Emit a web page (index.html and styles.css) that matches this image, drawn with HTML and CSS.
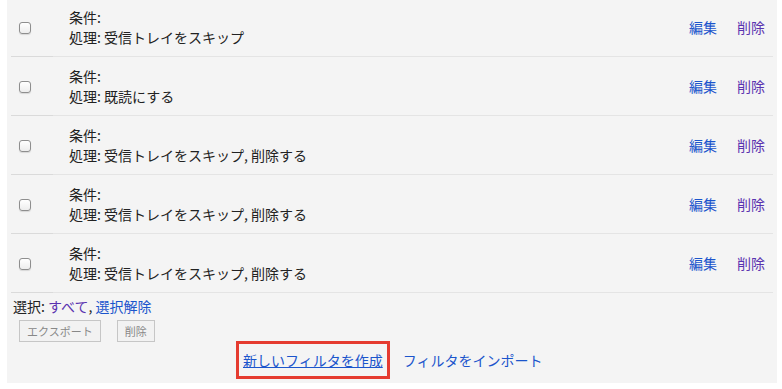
FILE: index.html
```html
<!DOCTYPE html>
<html lang="ja">
<head>
  <meta charset="UTF-8" />
  <title>フィルタ</title>
  <link rel="stylesheet" href="styles.css">
</head>
<body>
  <div class="panel">
    <table class="filters">
      <tr>
        <td class="check"><span class="box"></span></td>
        <td class="desc"><div>条件:</div><div>処理: 受信トレイをスキップ</div></td>
        <td class="actions"><a class="edit" href="#">編集</a><a class="del" href="#">削除</a></td>
      </tr>
      <tr>
        <td class="check"><span class="box"></span></td>
        <td class="desc"><div>条件:</div><div>処理: 既読にする</div></td>
        <td class="actions"><a class="edit" href="#">編集</a><a class="del" href="#">削除</a></td>
      </tr>
      <tr>
        <td class="check"><span class="box"></span></td>
        <td class="desc"><div>条件:</div><div>処理: 受信トレイをスキップ, 削除する</div></td>
        <td class="actions"><a class="edit" href="#">編集</a><a class="del" href="#">削除</a></td>
      </tr>
      <tr>
        <td class="check"><span class="box"></span></td>
        <td class="desc"><div>条件:</div><div>処理: 受信トレイをスキップ, 削除する</div></td>
        <td class="actions"><a class="edit" href="#">編集</a><a class="del" href="#">削除</a></td>
      </tr>
      <tr>
        <td class="check"><span class="box"></span></td>
        <td class="desc"><div>条件:</div><div>処理: 受信トレイをスキップ, 削除する</div></td>
        <td class="actions"><a class="edit" href="#">編集</a><a class="del" href="#">削除</a></td>
      </tr>
    </table>
    <div class="select">選択: <a class="visited" href="#">すべて</a>, <a class="blue" href="#">選択解除</a></div>
    <div class="buttons">
      <button>エクスポート</button>
      <button>削除</button>
    </div>
    <div class="create">
      <span class="highlight"><a class="new" href="#">新しいフィルタを作成</a></span>
      <a class="import" href="#">フィルタをインポート</a>
    </div>
  </div>
</body>
</html>
```

FILE: styles.css
```css
body {
  margin: 0;
  background-color: #fff;
  font-family: "Noto Sans CJK JP", "Liberation Sans", sans-serif;
  font-size: 14px;
  color: #222;
}
a {
  text-decoration: none;
}
.panel {
  margin-left: 7px;
  width: 770px;
  height: 383px;
  background-color: #f4f4f4;
  padding: 0 4px;
  box-sizing: border-box;
  overflow: hidden;
}
.filters {
  width: 762px;
  margin-top: -2px;
  border-collapse: collapse;
}
.filters td {
  height: 58px;
  padding: 0;
  border-bottom: 1px solid #e4e4e4;
  vertical-align: middle;
}
.filters td.check {
  width: 42px;
  border-bottom-color: #dadada;
}
.box {
  display: block;
  width: 10px;
  height: 10px;
  margin-left: 8px;
  margin-top: 2px;
  border: 1px solid #8e8e8e;
  border-radius: 3px;
  background: linear-gradient(#fff, #ededed);
  box-shadow: 0 1px 1px rgba(0, 0, 0, 0.12);
}
.desc {
  padding-left: 16px !important;
  line-height: 20px;
}
.actions {
  text-align: right;
  white-space: nowrap;
  padding-right: 8px !important;
}
.actions a {
  margin-left: 20px;
}
.edit, .blue, .new, .import {
  color: #1b55cc;
}
.del, .visited {
  color: #5a33b0;
}
.select {
  padding: 3px 0 0 2px;
  line-height: 20px;
}
.buttons {
  display: flex;
  gap: 16px;
  padding: 4px 0 0 8px;
}
.buttons button {
  font-family: "Noto Sans CJK JP", sans-serif;
  font-size: 11px;
  color: #888;
  background-color: #f2f2f2;
  border: 1px solid #c6c6c6;
  height: 22px;
  padding: 0 7px;
  line-height: 18px;
}
.create {
  display: flex;
  align-items: center;
  margin-top: -1px;
  padding-left: 225px;
  gap: 13px;
}
.highlight {
  display: inline-block;
  border: 3px solid #e53b30;
  padding: 7px 4px 7px 4px;
  line-height: 18px;
}
.new {
  text-decoration: underline;
}
```
